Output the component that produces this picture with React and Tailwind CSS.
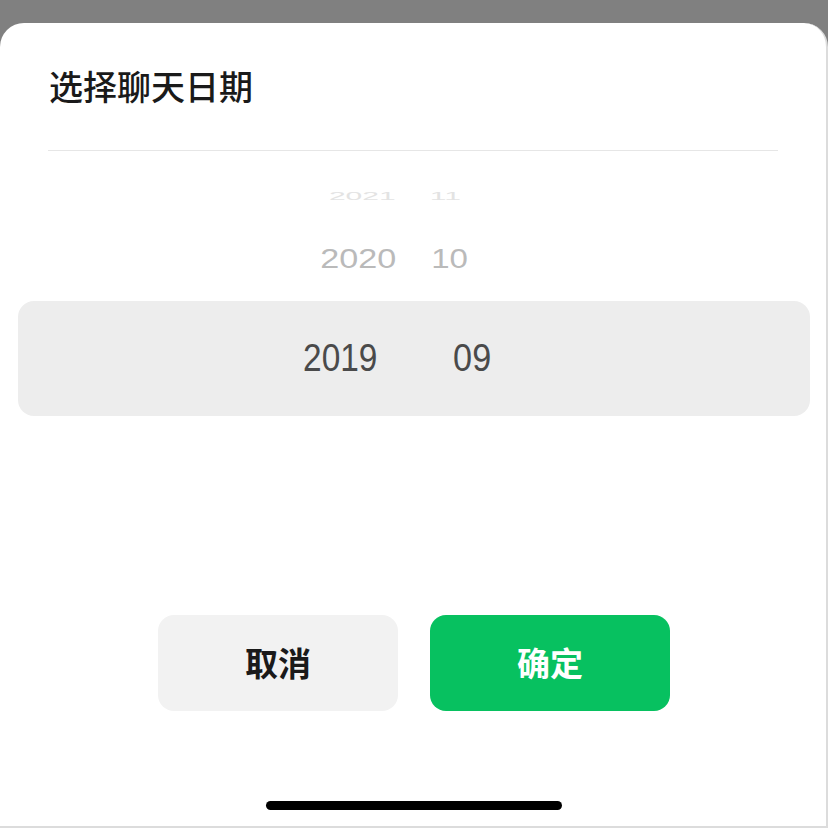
export default function App() {
  const num = { fontFamily: '"Liberation Sans", Arial, sans-serif' };
  const cjk = { fontFamily: '"Noto Sans CJK SC", "Noto Sans", sans-serif' };
  return (
    <div className="w-[828px] h-[828px] bg-[#808080] pt-[23px] overflow-hidden">
      <div className="h-[805px] bg-white rounded-t-[24px] border-r-2 border-b-2 border-[#dcdcdc] flex flex-col">
        <div className="pl-[49px] pt-[46px]">
          <div className="text-[34px] leading-[34px] font-medium text-[#1a1a1a]" style={cjk}>
            选择聊天日期
          </div>
        </div>
        <div className="mt-[47px] mx-[48px] h-px bg-[#e6e6e6]" />

        <div className="mt-[25px] h-[40px] flex items-center" style={num}>
          <span className="ml-[302px] w-[120px] text-center">
            <span className="inline-block text-[20px] text-[#e3e3e3] scale-x-[1.5] scale-y-[0.5]">2021</span>
          </span>
          <span className="w-[46px] text-center">
            <span className="inline-block text-[20px] text-[#e3e3e3] scale-x-[1.5] scale-y-[0.5]">11</span>
          </span>
        </div>

        <div className="mt-[23px] h-[40px] flex items-center" style={num}>
          <span className="ml-[298px] w-[120px] text-center">
            <span className="inline-block text-[28px] text-[#bababa] scale-x-[1.22]">2020</span>
          </span>
          <span className="w-[64px] text-center">
            <span className="inline-block text-[28px] text-[#bababa] scale-x-[1.18]">10</span>
          </span>
        </div>

        <div className="mt-[22px] ml-[18px] mr-[16px] h-[115px] rounded-[16px] bg-[#ededed] flex items-center" style={num}>
          <span className="ml-[262px] w-[120px] text-center">
            <span className="inline-block text-[38px] text-[#4a4a4a] scale-x-[0.88]">2019</span>
          </span>
          <span className="ml-[32px] w-[81px] text-center">
            <span className="inline-block text-[38px] text-[#4a4a4a] scale-x-[0.9]">09</span>
          </span>
        </div>

        <div className="mt-[199px] pl-[2px] flex justify-center gap-[32px]" style={cjk}>
          <button className="w-[240px] h-[96px] rounded-[16px] bg-[#f2f2f2] text-[33px] font-semibold text-[#1a1a1a] flex items-center justify-center">
            取消
          </button>
          <button className="w-[240px] h-[96px] rounded-[16px] bg-[#07c160] text-[33px] font-semibold text-white flex items-center justify-center">
            确定
          </button>
        </div>

        <div className="mt-[90px] ml-[266px] w-[296px] h-[9px] rounded-full bg-black" />
      </div>
    </div>
  );
}
